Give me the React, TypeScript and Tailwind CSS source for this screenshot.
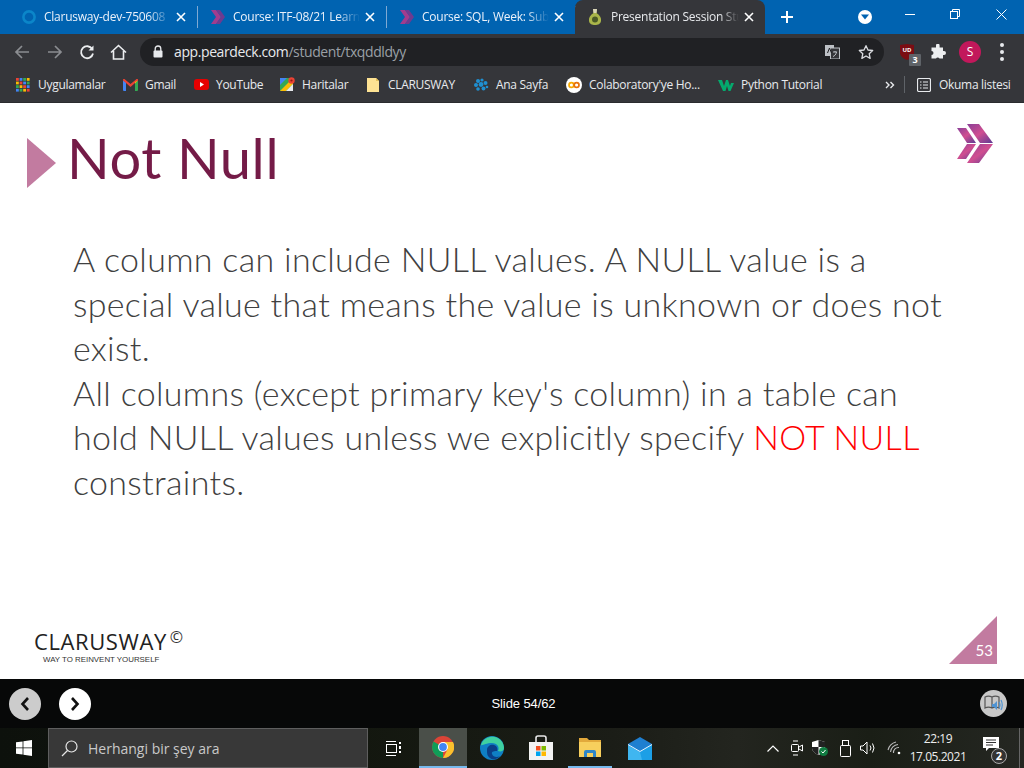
import React from "react";

const ui = "font-['Open_Sans','Noto_Sans',sans-serif]";

function X({ c = "#fff" }: { c?: string }) {
  return (
    <svg width="10" height="10" viewBox="0 0 10 10" className="shrink-0">
      <path d="M1 1 L9 9 M9 1 L1 9" stroke={c} strokeWidth="1.6" />
    </svg>
  );
}

function Chev({ size = 16 }: { size?: number }) {
  return (
    <svg width={size} height={size} viewBox="0 0 16 16">
      <path d="M1 1 H6 L11 8 L6 15 H1 L6 8 Z" fill="#a23c8e" />
      <path d="M6 1 H10 L15 8 L10 15 H6 L11 8 Z" fill="#6e3b90" />
    </svg>
  );
}

function Tab({ icon, title }: { icon: React.ReactNode; title: string }) {
  return (
    <div className="w-[189px] h-[34px] shrink-0 flex items-center pl-[12px] pr-[11px] border-r border-[#5c90c4] [border-image:linear-gradient(to_bottom,transparent_7px,#7fa9d3_7px,#7fa9d3_27px,transparent_27px)_1]">
      <div className="w-4 h-4 mr-[7px] flex items-center justify-center shrink-0">{icon}</div>
      <div className="flex-1 overflow-hidden whitespace-nowrap text-[12px] tracking-[-0.25px] text-[#eaf1fa] [mask-image:linear-gradient(to_right,black_82%,transparent)]">{title}</div>
      <div className="ml-[5px]"><X /></div>
    </div>
  );
}

function Bookmark({ icon, label, w }: { icon: React.ReactNode; label: string; w: string }) {
  return (
    <div className={`flex items-center shrink-0 ${w}`}>
      <div className="w-4 h-4 mr-[7px] flex items-center justify-center shrink-0">{icon}</div>
      <span className="text-[12px] tracking-[-0.3px] text-[#e8eaed] whitespace-nowrap">{label}</span>
    </div>
  );
}

function Apps() {
  const cols = ["#ea4335", "#fbbc04", "#34a853", "#4285f4"];
  return (
    <svg width="14" height="14" viewBox="0 0 14 14">
      {[0, 1, 2, 3].map((r) =>
        [0, 1, 2, 3].map((c) => (
          <rect key={`${r}-${c}`} x={c * 3.6} y={r * 3.6} width="2.8" height="2.8" fill={cols[(r + c * 3) % 4]} />
        ))
      )}
    </svg>
  );
}

export default function App() {
  return (
    <div className={`w-[1024px] h-[768px] overflow-hidden flex flex-col bg-white ${ui}`}>
      {/* Tab strip */}
      <div className="h-[34px] bg-[#0063b1] flex items-center shrink-0">
        <div className="w-[9px] shrink-0" />
        <Tab
          title="Clarusway-dev-750608"
          icon={
            <svg width="16" height="16" viewBox="0 0 16 16">
              <circle cx="8" cy="8" r="5.6" fill="none" stroke="#0b86c9" strokeWidth="2.6" />
            </svg>
          }
        />
        <Tab title="Course: ITF-08/21 Learn" icon={<Chev />} />
        <Tab title="Course: SQL, Week: Sub" icon={<Chev />} />
        <div className="w-[190px] -ml-[1px] h-[34px] shrink-0 bg-[#35363a] rounded-t-[8px] flex items-center pl-[12px] pr-[11px]">
          <div className="w-4 h-5 mr-[8px] flex items-center justify-center shrink-0">
            <svg width="14" height="18" viewBox="0 0 14 18">
              <path d="M5 1 H9 L8.5 5 C12 7 13.5 10 13 13 C12.5 16 10 17 7 17 C4 17 1.5 16 1 13 C.5 10 2 7 5.5 5 Z" fill="#a9b54a" />
              <path d="M5 1 H9 L8.5 5 H5.5 Z" fill="#d9d5b8" />
              <circle cx="7" cy="11.5" r="3" fill="#4b5a26" />
            </svg>
          </div>
          <div className="flex-1 overflow-hidden whitespace-nowrap text-[12px] tracking-[-0.25px] text-[#e8eaed] [mask-image:linear-gradient(to_right,black_85%,transparent)]">Presentation Session Student</div>
          <div className="ml-[5px]"><X /></div>
        </div>
        <div className="w-[44px] flex justify-center shrink-0">
          <svg width="12" height="12" viewBox="0 0 12 12">
            <path d="M6 0 V12 M0 6 H12" stroke="#fff" strokeWidth="2" />
          </svg>
        </div>
        <div className="flex-1 flex items-center justify-end h-full">
          <div className="w-[14px] h-[14px] rounded-full bg-white flex items-center justify-center mr-[15px]">
            <svg width="8" height="6" viewBox="0 0 8 6"><path d="M0 .5 H8 L4 5.5 Z" fill="#0063b1" /></svg>
          </div>
          <div className="w-[45px] h-full flex items-center justify-center pb-[6px]">
            <div className="w-[10px] h-px bg-white" />
          </div>
          <div className="w-[46px] h-full flex items-center justify-center pb-[6px]">
            <svg width="10" height="10" viewBox="0 0 10 10" fill="none" stroke="#fff">
              <rect x=".5" y="2.5" width="7" height="7" />
              <path d="M2.5 2.5 V.5 H9.5 V7.5 H7.5" />
            </svg>
          </div>
          <div className="w-[46px] h-full flex items-center justify-center pb-[6px]">
            <svg width="11" height="11" viewBox="0 0 11 11"><path d="M.5 .5 L10.5 10.5 M10.5 .5 L.5 10.5" stroke="#fff" /></svg>
          </div>
        </div>
      </div>

      {/* Toolbar */}
      <div className="h-[35px] bg-[#35363a] flex items-center shrink-0">
        <div className="w-[44px] flex justify-center">
          <svg width="16" height="16" viewBox="0 0 16 16" fill="none" stroke="#8b8d91" strokeWidth="1.7"><path d="M15 8 H2 M8 2 L2 8 L8 14" /></svg>
        </div>
        <div className="w-[21px] flex justify-center">
          <svg width="16" height="16" viewBox="0 0 16 16" fill="none" stroke="#8b8d91" strokeWidth="1.7"><path d="M1 8 H14 M8 2 L14 8 L8 14" /></svg>
        </div>
        <div className="w-[43px] flex justify-center">
          <svg width="16" height="16" viewBox="0 0 16 16" fill="none"><path d="M13.2 5 A6 6 0 1 0 14 9.5" stroke="#eceef0" strokeWidth="1.8" /><path d="M14.5 1.5 V6.5 H9.5 Z" fill="#eceef0" /></svg>
        </div>
        <div className="w-[20px] flex justify-center">
          <svg width="17" height="16" viewBox="0 0 17 16" fill="none" stroke="#eceef0" strokeWidth="1.6"><path d="M1 8.5 L8.5 1.5 L16 8.5 M3.5 7 V15 H13.5 V7" /></svg>
        </div>
        <div className="w-[744px] ml-[12px] h-[28px] rounded-full bg-[#202124] flex items-center shrink-0">
          <svg width="12" height="13" viewBox="0 0 12 13" className="ml-[12px] mr-[10px] shrink-0">
            <path d="M3.2 6 V3.8 A2.8 2.8 0 0 1 8.8 3.8 V6" fill="none" stroke="#e8eaed" strokeWidth="1.3" />
            <rect x="1.5" y="5.5" width="9" height="7" rx="1" fill="#e8eaed" />
          </svg>
          <span className="text-[14px] tracking-[-0.4px] text-[#e8eaed]">app.peardeck.com<span className="text-[#9aa0a6]">/student/txqddldyy</span></span>
          <div className="flex-1" />
          <svg width="15" height="14" viewBox="0 0 15 14" className="mr-[18px] shrink-0">
            <rect x="0" y="0" width="9" height="11" fill="#bdc1c6" />
            <rect x="5.5" y="3" width="9" height="11" fill="#35363a" stroke="#bdc1c6" />
            <path d="M2.5 8 L4.5 3 L6.5 8" stroke="#202124" fill="none" />
            <path d="M8 7 H12 M10 6 V7 M11.5 7 C11 9.5 9.5 11 8 11.5" stroke="#bdc1c6" fill="none" />
          </svg>
          <svg width="16" height="16" viewBox="0 0 24 24" fill="none" stroke="#dadce0" strokeWidth="2" className="mr-[10px] shrink-0">
            <path d="M12 2.5 L15 9 L22 9.8 L16.8 14.5 L18.2 21.5 L12 18 L5.8 21.5 L7.2 14.5 L2 9.8 L9 9 Z" strokeLinejoin="round" />
          </svg>
        </div>
        <div className="relative ml-[16px] w-[14px] h-[16px] shrink-0">
          <svg width="14" height="16" viewBox="0 0 14 16"><path d="M0 1 L7 0 L14 1 V9 C14 12 10 15 7 16 C4 15 0 12 0 9 Z" fill="#7b0d13" /></svg>
          <span className="absolute inset-0 flex items-center justify-center pb-[3px] text-[6px] font-bold text-white">UD</span>
          <span className="absolute left-[9px] top-[10px] w-[12px] h-[12px] bg-[#5f6368] rounded-[1px] text-[9px] leading-[12px] font-bold text-white text-center">3</span>
        </div>
        <div className="ml-[16px] shrink-0">
          <svg width="16" height="16" viewBox="0 0 16 16"><path d="M6 1.5 A1.8 1.8 0 0 1 9.6 1.5 V3.5 H13 V7 H14 A2 2 0 0 1 14 11 H13 V14.5 H9.5 A2 2 0 0 0 6 14.5 H1.5 V11 A2 2 0 0 0 1.5 7 V3.5 H6 Z" fill="#eceef0" /></svg>
        </div>
        <div className="ml-[13px] w-[22px] h-[22px] rounded-full bg-[#c2185b] flex items-center justify-center text-[12px] text-white shrink-0">S</div>
        <div className="ml-[19px] flex flex-col gap-[3px] shrink-0">
          <div className="w-[4px] h-[4px] rounded-full bg-[#e8eaed]" />
          <div className="w-[4px] h-[4px] rounded-full bg-[#e8eaed]" />
          <div className="w-[4px] h-[4px] rounded-full bg-[#e8eaed]" />
        </div>
      </div>

      {/* Bookmarks */}
      <div className="h-[34px] bg-[#35363a] flex items-center pl-[15px] pb-[2px] border-b border-[#2a2b2e] shrink-0">
        <Bookmark w="w-[107px]" icon={<Apps />} label="Uygulamalar" />
        <Bookmark
          w="w-[71px]"
          label="Gmail"
          icon={
            <svg width="15" height="12" viewBox="0 0 15 12">
              <path d="M0 1.5 L3 3 V12 H1 A1 1 0 0 1 0 11 Z" fill="#4285f4" />
              <path d="M15 1.5 L12 3 V12 H14 A1 1 0 0 0 15 11 Z" fill="#34a853" />
              <path d="M0 1.5 A1 1 0 0 1 2 .5 L7.5 5 L13 .5 A1 1 0 0 1 15 1.5 L12 4 L7.5 8 L3 4 Z" fill="#ea4335" />
              <path d="M12 3 L15 1.5 L12 4.5 Z" fill="#fbbc04" />
            </svg>
          }
        />
        <Bookmark
          w="w-[86px]"
          label="YouTube"
          icon={
            <svg width="15" height="11" viewBox="0 0 15 11">
              <rect width="15" height="11" rx="3" fill="#e60000" />
              <path d="M6 3 L10 5.5 L6 8 Z" fill="#fff" />
            </svg>
          }
        />
        <Bookmark
          w="w-[86px]"
          label="Haritalar"
          icon={
            <svg width="15" height="15" viewBox="0 0 15 15">
              <rect y="1" width="13" height="13" fill="#34a853" />
              <path d="M0 14 L13 1 V7 L6 14 Z" fill="#fbbc04" />
              <path d="M6 14 L13 7 V14 Z" fill="#e8eaed" />
              <path d="M0 1 H7 L0 8 Z" fill="#4285f4" />
              <circle cx="11.5" cy="3.5" r="3.2" fill="#ea4335" />
              <circle cx="11.5" cy="3.5" r="1.1" fill="#8f1d14" />
            </svg>
          }
        />
        <Bookmark
          w="w-[108px]"
          label="CLARUSWAY"
          icon={
            <svg width="12" height="14" viewBox="0 0 12 14">
              <path d="M0 0 H9 L12 3 V14 H0 Z" fill="#fde293" />
              <path d="M9 0 L12 3 H9 Z" fill="#e6c15a" />
            </svg>
          }
        />
        <Bookmark
          w="w-[93px]"
          label="Ana Sayfa"
          icon={
            <svg width="16" height="15" viewBox="0 0 16 15" fill="#1f8fd0">
              <circle cx="5" cy="4" r="2" /><circle cx="9" cy="3" r="1.6" /><circle cx="12.5" cy="6" r="2" />
              <circle cx="3" cy="8" r="2" /><circle cx="8" cy="7.5" r="2.4" /><circle cx="5" cy="12" r="1.8" />
              <circle cx="10.5" cy="11.5" r="2" /><circle cx="14" cy="10" r="1.3" />
            </svg>
          }
        />
        <Bookmark
          w="w-[152px]"
          label="Colaboratory'ye Ho..."
          icon={
            <svg width="16" height="16" viewBox="0 0 16 16">
              <circle cx="8" cy="8" r="8" fill="#fff" />
              <circle cx="5.4" cy="8" r="2.4" fill="none" stroke="#f9ab00" strokeWidth="1.7" />
              <circle cx="10.6" cy="8" r="2.4" fill="none" stroke="#e8710a" strokeWidth="1.7" />
            </svg>
          }
        />
        <Bookmark
          w="w-[167px]"
          label="Python Tutorial"
          icon={
            <svg width="16" height="12" viewBox="0 0 16 12">
              <path d="M0 1 H4 L6 7 L8 1 H10 L12 7 L13 4 H16 L12.5 12 H10.5 L9 7 L7.5 12 H5 Z" fill="#04aa6d" />
            </svg>
          }
        />
        <svg width="10" height="8" viewBox="0 0 10 8" fill="none" stroke="#e8eaed" strokeWidth="1.4" className="shrink-0">
          <path d="M1 1 L4 4 L1 7 M5.5 1 L8.5 4 L5.5 7" />
        </svg>
        <div className="w-px h-[17px] bg-[#5f6368] ml-[9px] mr-[12px] shrink-0" />
        <svg width="14" height="14" viewBox="0 0 14 14" fill="none" stroke="#e8eaed" className="mr-[8px] shrink-0">
          <rect x=".5" y=".5" width="13" height="13" rx="1.5" strokeWidth="1.2" />
          <path d="M3 4 H4.5 M6 4 H11 M3 7 H4.5 M6 7 H11 M3 10 H4.5 M6 10 H11" strokeWidth="1.2" />
        </svg>
        <span className="text-[12px] tracking-[-0.3px] text-[#e8eaed] whitespace-nowrap">Okuma listesi</span>
      </div>

      {/* Slide */}
      <div className="h-[576px] bg-white flex flex-col shrink-0">
        <div className="flex items-start pl-[27px] pt-[35px] pr-[31px] h-[134px] shrink-0">
          <svg width="29" height="50" viewBox="0 0 29 50" className="shrink-0">
            <path d="M0 0 L29 25 L0 50 Z" fill="#c27ba0" />
          </svg>
          <h1 className="ml-[11px] -mt-[12px] text-[56px] leading-[64px] text-[#741b47] font-['Lato',sans-serif] tracking-[0.6px] whitespace-nowrap">Not Null</h1>
          <div className="flex-1" />
          <svg width="36" height="39" viewBox="0 0 36 39" className="-mt-[14px] shrink-0">
            <defs>
              <linearGradient id="cg" x1="0" y1="0" x2="1" y2="1">
                <stop offset="0" stopColor="#8a3f98" />
                <stop offset=".5" stopColor="#d04e90" />
                <stop offset="1" stopColor="#5b3b95" />
              </linearGradient>
            </defs>
            <path d="M0 4 H9 L19 19 H10 Z" fill="url(#cg)" />
            <path d="M10 20 H19 L9 35 H0 Z" fill="url(#cg)" />
            <path d="M10 0 H22 L36 19 H23 Z" fill="url(#cg)" />
            <path d="M23 20 H36 L22 39 H10 Z" fill="url(#cg)" />
          </svg>
        </div>
        <div className="pl-[73px] pr-[60px] text-[34px] leading-[44.6px] text-[#404040] font-['Lato',sans-serif] tracking-[0.31px] font-light">
          <p className="whitespace-nowrap">A column can include NULL values. A NULL value is a</p>
          <p className="whitespace-nowrap">special value that means the value is unknown or does not</p>
          <p>exist.</p>
          <p className="whitespace-nowrap">All columns (except primary key's column) in a table can</p>
          <p className="whitespace-nowrap">hold NULL values unless we explicitly specify <span className="text-[#ff0000]">NOT NULL</span></p>
          <p>constraints.</p>
        </div>
        <div className="flex-1" />
        <div className="flex items-end justify-between pl-[34px] pr-[27px] pb-[15px]">
          <div className="flex flex-col text-black -mb-[1px]">
            <div className="flex items-start h-[27px]">
              <span className="text-[22px] leading-[29px] tracking-[0.6px] text-[#222] font-['Open_Sans',sans-serif]">CLARUSWAY</span>
              <span className="ml-[3px] text-[16px] leading-[20px] text-[#333] font-['Open_Sans',sans-serif]">©</span>
            </div>
            <span className="ml-[9px] mt-[1px] text-[7.9px] leading-[10px] text-[#333] font-['Liberation_Sans',sans-serif]">WAY TO REINVENT YOURSELF</span>
          </div>
          <div className="relative w-[48px] h-[48px]">
            <svg width="48" height="48" viewBox="0 0 48 48"><path d="M48 0 V48 H0 Z" fill="#c27ba0" /></svg>
            <span className="absolute right-[4px] bottom-[5px] text-[15px] leading-[18px] text-white font-normal font-['Lato',sans-serif]">53</span>
          </div>
        </div>
      </div>

      {/* Player bar */}
      <div className="h-[49px] bg-[#070808] flex items-center shrink-0 pl-[9px] pr-[17px]">
        <div className="w-8 h-8 rounded-full bg-[#cccccc] flex items-center justify-center">
          <svg width="10" height="14" viewBox="0 0 10 14" fill="none" stroke="#111" strokeWidth="2.6"><path d="M8 1 L2.5 7 L8 13" /></svg>
        </div>
        <div className="w-8 h-8 rounded-full bg-white flex items-center justify-center ml-[18px]">
          <svg width="10" height="14" viewBox="0 0 10 14" fill="none" stroke="#111" strokeWidth="2.6"><path d="M2 1 L7.5 7 L2 13" /></svg>
        </div>
        <div className="flex-1 text-center text-[13px] tracking-[-0.1px] text-white pr-[24px] font-['Liberation_Sans',sans-serif]">Slide 54/62</div>
        <div className="w-[27px] h-[27px] rounded-full bg-[#c8c8c8] flex items-center justify-center">
          <svg width="19" height="17" viewBox="0 0 19 17" fill="none">
            <path d="M8 2 C6 1 3 1 1 2 V13 C3 12 6 12 8 13 C10 12 13 12 15 13 V2 C13 1 10 1 8 2 V13" stroke="#555" strokeWidth="1.2" />
            <path d="M8 9 H10 L13 6 V15 L10 12 H8 Z" fill="#4f93d2" />
            <path d="M15 7 Q17 10 15 13 M17 5 Q19.5 10 17 15" stroke="#4f93d2" strokeWidth="1.2" />
          </svg>
        </div>
      </div>

      {/* Taskbar */}
      <div className="h-[40px] flex items-center shrink-0 bg-[#11130f] bg-[linear-gradient(90deg,#0d110c_0%,#13170f_35%,#1b1d17_60%,#23251f_72%,#1a1e16_85%,#252722_100%)] text-white">
        <div className="w-[48px] h-full flex items-center justify-center shrink-0">
          <svg width="16" height="16" viewBox="0 0 16 16" fill="#fff">
            <path d="M0 2.3 L6.6 1.4 V7.5 H0 Z M7.4 1.3 L16 0 V7.5 H7.4 Z M0 8.3 H6.6 V14.6 L0 13.7 Z M7.4 8.3 H16 V16 L7.4 14.7 Z" />
          </svg>
        </div>
        <div className="w-[320px] h-full bg-[#383838] border border-[#5e5e5e] flex items-center pl-[12px] shrink-0">
          <svg width="17" height="17" viewBox="0 0 17 17" fill="none" stroke="#e6e6e6" strokeWidth="1.2">
            <circle cx="10.5" cy="6.5" r="5.5" /><path d="M6.5 10.5 L1 16" />
          </svg>
          <span className="ml-[10px] text-[14px] text-[#c9c9c9] font-['Open_Sans',sans-serif]">Herhangi bir şey ara</span>
        </div>
        <div className="w-[51px] h-full flex items-center justify-center shrink-0">
          <svg width="16" height="15" viewBox="0 0 16 15" fill="none" stroke="#fff">
            <path d="M0 .5 H10 M0 14.5 H10" /><rect x=".5" y="3.5" width="10" height="8" />
            <rect x="13" y="1" width="2" height="2" fill="#fff" stroke="none" />
            <rect x="13" y="5" width="2" height="3" fill="#fff" stroke="none" />
            <rect x="13" y="10" width="2" height="2" fill="#fff" stroke="none" />
          </svg>
        </div>
        <div className="w-[48px] h-full bg-[#4a4f49] border-b-2 border-[#76b9ed] flex items-center justify-center shrink-0">
          <svg width="22" height="22" viewBox="0 0 22 22">
            <circle cx="11" cy="11" r="11" fill="#db4437" />
            <path d="M11 11 L1.5 5.5 A11 11 0 0 0 11 22 Z" fill="#0f9d58" />
            <path d="M11 6 H21 A11 11 0 0 1 11 22 L15.5 13.5 Z" fill="#fbc02d" />
            <circle cx="11" cy="11" r="5" fill="#fff" />
            <circle cx="11" cy="11" r="3.9" fill="#4285f4" />
          </svg>
        </div>
        <div className="w-[49px] h-full flex items-center justify-center shrink-0 pb-[1px]">
          <svg width="24" height="24" viewBox="0 0 24 24">
            <circle cx="12" cy="12" r="12" fill="#0f7fc4" />
            <path d="M1 9 C3 2 10 0 15 1 C20 2 24 7 24 12 C24 15 21 16 18 15 C20 11 17 7 12 7 C6 7 2 10 1 9 Z" fill="#3fd0a0" />
            <path d="M7 14 C7 10 11 8 14 9 C17 10 18 13 17 15 C15 15 11 15 12 18 C13 21 17 22 20 20 C17 24 12 24 10 22 C7 20 7 17 7 14 Z" fill="#0a3f87" />
          </svg>
        </div>
        <div className="w-[49px] h-full flex items-center justify-center shrink-0 pb-[1px]">
          <svg width="24" height="26" viewBox="0 0 24 26">
            <path d="M7 8 V3 A2 2 0 0 1 9 1 H15 A2 2 0 0 1 17 3 V8" fill="none" stroke="#e8e8e8" strokeWidth="1.6" />
            <path d="M0 7 H24 V25 H0 Z" fill="#f3f3f3" />
            <rect x="7" y="11" width="4.5" height="4.5" fill="#f25022" />
            <rect x="12.5" y="11" width="4.5" height="4.5" fill="#7fba00" />
            <rect x="7" y="16.5" width="4.5" height="4.5" fill="#00a4ef" />
            <rect x="12.5" y="16.5" width="4.5" height="4.5" fill="#ffb900" />
          </svg>
        </div>
        <div className="w-[50px] h-full flex items-center justify-center shrink-0 relative">
          <svg width="22" height="19" viewBox="0 0 22 19" className="mb-[2px]">
            <path d="M0 0 H8 L10 2 H22 V5 H0 Z" fill="#e2a93b" />
            <path d="M0 4 H22 V19 H0 Z" fill="#f7cf5d" />
            <path d="M5 14 A2 2 0 0 1 7 12 H15 A2 2 0 0 1 17 14 V19 H14 V15 H8 V19 H5 Z" fill="#2e86c8" />
          </svg>
          <div className="absolute left-[3px] right-[3px] bottom-0 h-[2px] bg-[#76b9ed]" />
        </div>
        <div className="w-[49px] h-full flex items-center justify-center shrink-0">
          <svg width="24" height="23" viewBox="0 0 24 23">
            <path d="M0 7 L12 0 L24 7 V23 H0 Z" fill="#1f7fd0" />
            <path d="M0 8 L12 15 L24 8 V23 H0 Z" fill="#3fb6f0" />
            <path d="M12 15 L24 8 V23 H14 Z" fill="#1c9fe6" />
            <path d="M0 7.5 L12 14.5 L24 7.5" fill="none" stroke="#e6f5ff" strokeWidth="1" />
          </svg>
        </div>
        <div className="w-[103px] shrink-0" />
        <svg width="12" height="7" viewBox="0 0 12 7" fill="none" stroke="#fff" strokeWidth="1.2" className="shrink-0"><path d="M.5 6.5 L6 1 L11.5 6.5" /></svg>
        <svg width="12" height="16" viewBox="0 0 12 16" fill="none" stroke="#fff" className="ml-[12px] shrink-0">
          <path d="M2 1 H7 M2 15 H7" /><rect x=".5" y="4.5" width="7" height="7" rx="1" /><path d="M8 7 L11.5 5 V11 L8 9" />
        </svg>
        <svg width="16" height="16" viewBox="0 0 16 16" className="ml-[9px] shrink-0">
          <path d="M0 2 L6.5 0 L13 2 V8 C13 11 10 13.5 6.5 15 C3 13.5 0 11 0 8 Z" fill="#fff" />
          <path d="M6.5 0 L13 2 V7 H6.5 Z M0 7 H6.5 V15 C3 13.5 0 11 0 8 Z" fill="#222" />
          <circle cx="11.5" cy="11.5" r="4.5" fill="#107c41" />
          <path d="M9.5 11.5 L11 13 L13.5 10" stroke="#fff" fill="none" />
        </svg>
        <svg width="12" height="17" viewBox="0 0 12 17" fill="none" stroke="#fff" className="ml-[12px] shrink-0">
          <rect x="2.5" y=".5" width="6" height="5" /><rect x=".5" y="5.5" width="10" height="11" rx="1" />
        </svg>
        <svg width="16" height="14" viewBox="0 0 16 14" fill="none" stroke="#fff" className="ml-[8px] shrink-0">
          <path d="M.5 5 H3 L7 1 V13 L3 9 H.5 Z M10 4.5 Q12 7 10 9.5 M12.5 2.5 Q15.5 7 12.5 11.5" />
        </svg>
        <svg width="14" height="14" viewBox="0 0 14 14" fill="none" stroke="#bbb" strokeWidth="1.1" className="ml-[11px] shrink-0">
          <path d="M1 9 A11 11 0 0 1 9 1 M3.5 11 A8 8 0 0 1 11 3.5 M6.5 12 A5 5 0 0 1 12 6.5" />
          <circle cx="12" cy="12" r="1.3" fill="#fff" stroke="none" />
        </svg>
        <div className="w-[60px] ml-[7px] flex flex-col items-center text-[12px] leading-[18px] tracking-[-0.45px] text-[#eee] shrink-0">
          <span>22:19</span>
          <span>17.05.2021</span>
        </div>
        <div className="relative w-[56px] h-full shrink-0 flex items-center pl-[15px]">
          <svg width="16" height="14" viewBox="0 0 16 14" className="mb-[8px]">
            <path d="M0 0 H16 V11 H6 L3 14 V11 H0 Z" fill="#fff" />
            <path d="M3 3 H13 M3 5.5 H13 M3 8 H10" stroke="#333" />
          </svg>
          <span className="absolute left-[23px] bottom-[4px] w-[16px] h-[16px] rounded-full border border-[#aaa] bg-[#333] text-[11px] leading-[14px] text-center font-bold text-white">2</span>
          <div className="absolute right-[4px] top-0 bottom-0 w-px bg-[#666]" />
        </div>
      </div>
    </div>
  );
}
